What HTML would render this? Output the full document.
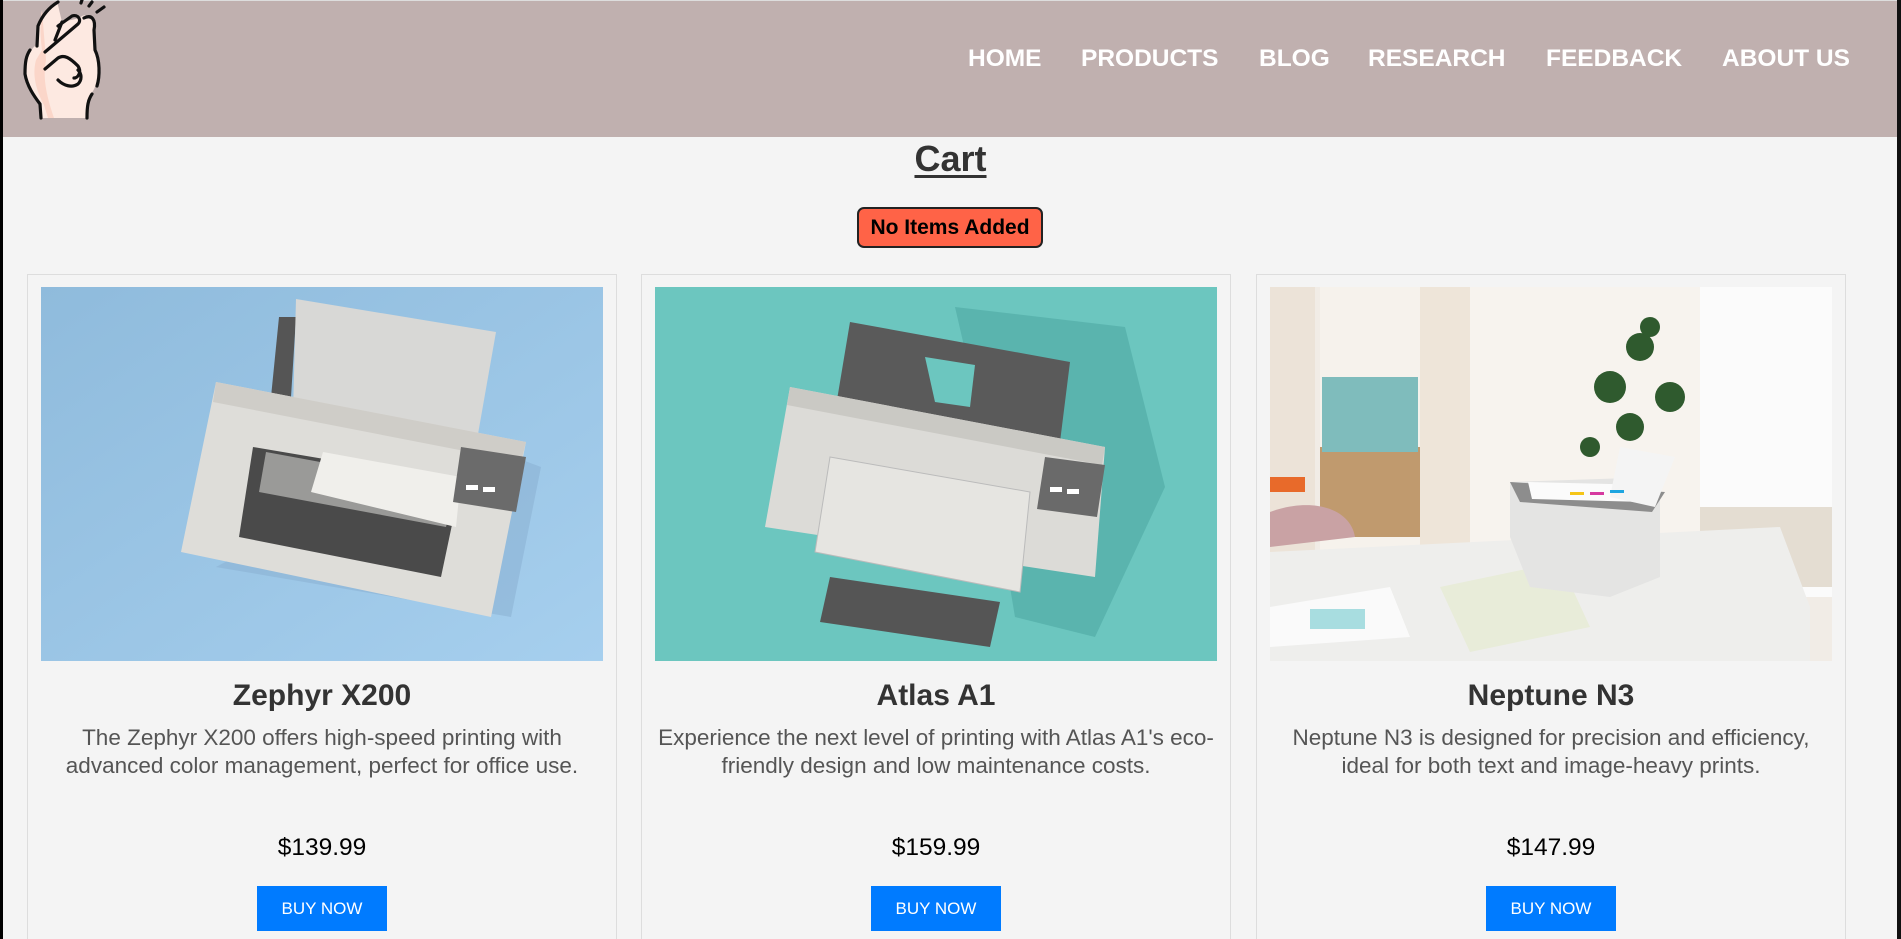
<!DOCTYPE html>
<html><head><meta charset="utf-8"><style>
*{margin:0;padding:0;box-sizing:border-box}
html,body{width:1901px;height:939px;overflow:hidden;background:#f4f4f4;font-family:"Liberation Sans",Arial,sans-serif}
#wrap{position:relative;width:1901px;height:939px;overflow:hidden}
.lb{position:absolute;left:0;top:0;width:3px;height:939px;background:#000;z-index:5}
.rb{position:absolute;left:1897px;top:0;width:4px;height:939px;background:#111;z-index:5}
header{position:absolute;left:0;top:1px;width:1897px;height:136px;background:#c0b0af}
.top{position:absolute;left:0;top:0;width:1901px;height:1px;background:#ddd}
nav a{position:absolute;top:44px;color:#fff;font-weight:bold;font-size:24.5px;text-decoration:none;white-space:nowrap}
h1{position:absolute;left:0;width:1901px;top:138px;text-align:center;font-size:36px;color:#333;text-decoration:underline;text-underline-offset:4px;text-decoration-thickness:3px}
.badge{position:absolute;left:857px;top:207px;width:186px;height:41px;background:#ff6347;border:2px solid #222;border-radius:7px;font-weight:bold;font-size:21px;text-align:center;line-height:37px;color:#000}
.card{position:absolute;top:274px;width:590px;height:700px;border:1px solid #ddd;background:#f4f4f4}
.card svg{position:absolute;left:13px;top:12px}
.card h2{position:absolute;top:404px;left:0;width:100%;text-align:center;font-size:30px;color:#333}
.card p.d{position:absolute;top:449px;left:13px;width:562px;text-align:center;font-size:22.5px;line-height:28px;color:#555}
.card p.p{position:absolute;top:559px;left:0;width:100%;text-align:center;font-size:24.5px;color:#000}
.btn{position:absolute;left:229px;top:611px;width:130px;height:45px;background:#007bff;color:#fff;font-size:17px;text-align:center;line-height:45px}
</style></head><body><div id="wrap">
<div class="top"></div>
<header>
<svg style="position:absolute;left:0;top:-1px" width="120" height="125" viewBox="0 0 120 125">
<path d="M57 1 C46 8 40 18 37 30 L36 45 C28 52 25 62 26 78 C30 92 38 100 41 108 L41 118 L87 118 L87 100 C95 90 100 78 99 65 L95 50 L94 22 C90 14 82 14 80 18 L62 22 Z" fill="#fde9e1"/>
<path d="M42 10 C40 20 40 36 42 50 L36 60 C32 75 36 90 44 105 L48 118 L54 118 C48 100 42 80 46 60 Z" fill="#fbd6c9"/>
<g fill="none" stroke="#111" stroke-width="3.2" stroke-linecap="round" stroke-linejoin="round">
<path d="M58 2 C48 8 42 16 38 26 L37 46"/>
<path d="M30 50 C26 56 25 62 25 74 C27 86 34 96 40 104 L41 118"/>
<path d="M84 18 C92 14 96 20 94 30 L95 50 C100 60 100 76 97 86"/>
<path d="M92 94 C88 100 87 106 87 118"/>
<path d="M45 52 L78 24 C82 20 78 14 72 16 L58 26"/>
<path d="M62 22 L55 40"/>
<path d="M45 69 L58 58 C64 54 70 58 78 66 C82 72 78 78 74 78"/>
<path d="M58 80 C64 86 72 88 78 84 C82 80 82 74 78 70"/>
<path d="M81 3 L82 0"/><path d="M89 6 L92 2"/><path d="M97 12 L104 7"/>
</g></svg>
<nav><a style="left:968px">HOME</a><a style="left:1081px">PRODUCTS</a><a style="left:1259px">BLOG</a><a style="left:1368px">RESEARCH</a><a style="left:1546px">FEEDBACK</a><a style="left:1722px">ABOUT US</a></nav>
</header>
<h1>Cart</h1>
<div class="badge">No Items Added</div>

<div class="card" style="left:27px">
<svg width="562" height="374" viewBox="0 0 562 374">
<defs><linearGradient id="g1" x1="0" x2="1" y1="0" y2="1"><stop offset="0" stop-color="#8fbbdc"/><stop offset="1" stop-color="#a6cfee"/></linearGradient></defs>
<rect width="562" height="374" fill="url(#g1)"/>
<path d="M175 280 L470 330 L500 180 L420 150 Z" fill="#8cb3d3" opacity=".6"/>
<path d="M238 30 L255 30 L250 110 L230 110 Z" fill="#555"/>
<path d="M255 12 L455 45 L425 215 L250 200 Z" fill="#d8d8d6"/>
<path d="M175 95 L485 155 L450 330 L140 265 Z" fill="#deddd9"/>
<path d="M175 95 L485 155 L480 175 L172 115 Z" fill="#cfcdc8"/>
<path d="M212 160 L420 195 L400 290 L198 250 Z" fill="#4a4a4a"/>
<path d="M225 165 L415 200 L405 240 L218 205 Z" fill="#9a9a98"/>
<path d="M282 165 L420 190 L415 240 L270 205 Z" fill="#f0efeb"/>
<path d="M420 160 L485 170 L475 225 L412 215 Z" fill="#6b6b6b"/>
<rect x="425" y="198" width="12" height="5" fill="#fff"/><rect x="442" y="200" width="12" height="5" fill="#fff"/>
</svg>
<h2>Zephyr X200</h2>
<p class="d">The Zephyr X200 offers high-speed printing with advanced color management, perfect for office use.</p>
<p class="p">$139.99</p><div class="btn">BUY NOW</div>
</div>

<div class="card" style="left:641px">
<svg width="562" height="374" viewBox="0 0 562 374">
<rect width="562" height="374" fill="#6cc6bf"/>
<path d="M300 20 L470 40 L510 200 L440 350 L360 330 L330 150 Z" fill="#4ea9a3" opacity=".6"/>
<path d="M195 35 L415 75 L400 195 L175 155 Z" fill="#5a5a5a"/>
<path d="M270 70 L320 78 L315 120 L280 115 Z" fill="#6cc6bf"/>
<path d="M135 100 L450 160 L440 290 L110 240 Z" fill="#dcdbd7"/>
<path d="M135 100 L450 160 L447 178 L132 118 Z" fill="#cac9c4"/>
<path d="M175 170 L375 205 L365 305 L160 265 Z" fill="#e6e5e1" stroke="#bbb"/>
<path d="M175 290 L345 315 L335 360 L165 335 Z" fill="#555"/>
<path d="M390 170 L450 178 L442 230 L382 222 Z" fill="#6a6a6a"/>
<rect x="395" y="200" width="12" height="5" fill="#fff"/><rect x="412" y="202" width="12" height="5" fill="#fff"/>
</svg>
<h2>Atlas A1</h2>
<p class="d">Experience the next level of printing with Atlas A1's eco-friendly design and low maintenance costs.</p>
<p class="p">$159.99</p><div class="btn">BUY NOW</div>
</div>

<div class="card" style="left:1256px">
<svg width="562" height="374" viewBox="0 0 562 374">
<rect width="562" height="374" fill="#f1ece6"/>
<rect x="0" y="0" width="45" height="374" fill="#ece3d8"/>
<rect x="50" y="0" width="100" height="270" fill="#f6f2ec"/>
<rect x="50" y="160" width="100" height="90" fill="#c09a6e"/>
<rect x="52" y="90" width="96" height="75" fill="#7fbcbc"/>
<rect x="150" y="0" width="50" height="270" fill="#eee5d9"/>
<rect x="200" y="0" width="230" height="300" fill="#f7f3ee"/>
<rect x="430" y="0" width="132" height="310" fill="#fbfbfb"/>
<rect x="430" y="220" width="132" height="80" fill="#e4ddd2"/>
<rect x="0" y="190" width="35" height="15" fill="#e86a2a"/>
<path d="M0 225 C40 210 80 220 85 250 L0 260 Z" fill="#c9a2a4"/>
<g fill="#2f5a2e"><circle cx="370" cy="60" r="14"/><circle cx="340" cy="100" r="16"/><circle cx="400" cy="110" r="15"/><circle cx="360" cy="140" r="14"/><circle cx="320" cy="160" r="10"/><circle cx="380" cy="40" r="10"/></g>
<path d="M0 265 L510 240 L540 320 L540 374 L0 374 Z" fill="#eeeeec"/>
<path d="M0 320 L120 300 L140 350 L0 360 Z" fill="#fafafa"/>
<rect x="40" y="322" width="55" height="20" fill="#a8dde0"/>
<path d="M170 300 L290 275 L320 340 L200 365 Z" fill="#e8ecd9"/>
<path d="M240 195 L390 190 L390 290 L340 310 L260 300 L240 250 Z" fill="#e4e4e3"/>
<path d="M240 195 L395 205 L382 225 L250 215 Z" fill="#8d8d8d"/>
<path d="M258 195 L380 198 L375 215 L262 212 Z" fill="#fbfbfb"/>
<path d="M350 160 L405 170 L385 220 L340 210 Z" fill="#f4f4f4"/>
<rect x="300" y="205" width="14" height="3" fill="#f5c518"/><rect x="320" y="205" width="14" height="3" fill="#d63aa0"/><rect x="340" y="203" width="14" height="3" fill="#1ea5e0"/>
</svg>
<h2>Neptune N3</h2>
<p class="d">Neptune N3 is designed for precision and efficiency, ideal for both text and image-heavy prints.</p>
<p class="p">$147.99</p><div class="btn">BUY NOW</div>
</div>
<div class="lb"></div><div class="rb"></div>
</div></body></html>
